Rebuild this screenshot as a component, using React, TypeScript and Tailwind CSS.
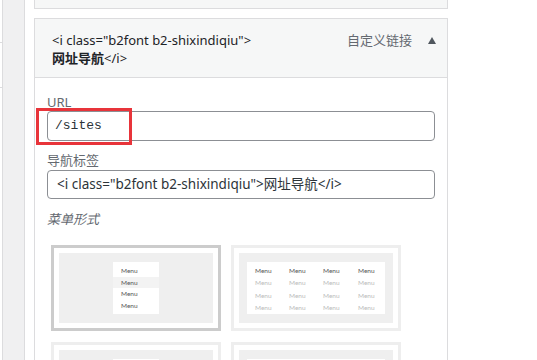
import React from "react";

const sans = { fontFamily: '"Noto Sans", "Noto Sans CJK SC", sans-serif' };
const tiny = { fontFamily: 'Lato, "Noto Sans", sans-serif' };

function VerticalCard({ selected }: { selected?: boolean }) {
  return (
    <div
      className={`w-[170px] h-[86px] border-[3px] ${selected ? "border-[#cccccc]" : "border-[#eeeeee]"} bg-white p-[5px]`}
    >
      <div className="w-full h-full bg-[#efefef] flex justify-center items-start pt-[9px]">
        <div className="w-[46px] h-[52px] bg-white pt-[3px] flex flex-col" style={tiny}>
          {[0, 1, 2, 3].map((i) => (
            <div
              key={i}
              className={`h-[11.5px] leading-[11.5px] text-[6.5px] text-[#555] pl-[8px] ${i === 1 ? "bg-[#f3f3f3]" : ""}`}
            >
              Menu
            </div>
          ))}
        </div>
      </div>
    </div>
  );
}

function GridCard() {
  return (
    <div className="w-[170px] h-[86px] border-[3px] border-[#eeeeee] bg-white p-[5px]">
      <div className="w-full h-full bg-[#efefef] pt-[9px] px-[8px]">
        <div
          className="w-full h-[52px] bg-white pt-[3px] pl-[8px] grid grid-cols-[34px_34px_35px_35px]"
          style={tiny}
        >
          {[0, 1, 2, 3].map((r) =>
            [0, 1, 2, 3].map((c) => (
              <div
                key={`${r}-${c}`}
                className={`h-[11.5px] leading-[11.5px] text-[6.5px] ${r === 0 ? "text-[#555]" : "text-[#bbbbbb]"}`}
              >
                Menu
              </div>
            ))
          )}
        </div>
      </div>
    </div>
  );
}

export default function App() {
  return (
    <div className="relative w-[537px] h-[360px] overflow-hidden flex bg-white" style={sans}>
      {/* left page background strip */}
      <div className="w-[25px] h-full bg-[#f0f0f1] border-r border-[#dcdcde] flex shrink-0">
        <div className="w-[3px] h-full bg-white border-r border-[#dcdcde] flex flex-col">
          <div className="h-[43px] shrink-0 border-b border-[#dcdcde]" />
          <div className="h-[45px] shrink-0 border-b border-[#dcdcde]" />
        </div>
      </div>

      {/* menu edit area */}
      <div className="flex-1 bg-white pl-[9px] flex flex-col">
        <div className="w-[414px] h-[9px] shrink-0 bg-[#f6f7f7] border border-t-0 border-[#dcdcde]" />
        <div className="h-[9px] shrink-0" />
        <div className="w-[414px] shrink-0 border border-[#dcdcde] flex flex-col">
          {/* header */}
          <div className="bg-[#f6f7f7] border-b border-[#dcdcde] pt-[12px] pb-[10px] pl-[17px] pr-[11px] flex justify-between items-start">
            <div className="text-[13px] leading-[18px] text-[#1d2327]">
              &lt;i class="b2font b2-shixindiqiu"&gt;
              <br />
              <span className="font-semibold">网址导航</span>&lt;/i&gt;
            </div>
            <div className="flex items-center gap-[16px] text-[13px] leading-[18px] text-[#646970]">
              <span>自定义链接</span>
              <svg width="8" height="7" viewBox="0 0 8 7">
                <path d="M4 0 L8 7 L0 7 Z" fill="#50575e" />
              </svg>
            </div>
          </div>

          {/* body */}
          <div className="bg-white px-[12px] pt-[15px] flex flex-col">
            <div className="text-[13px] leading-[18px] text-[#646970]">URL</div>
            <div
              className="h-[30px] shrink-0 border border-[#8c8f94] rounded-[4px] flex items-center pl-[7px] text-[13px] text-[#2c3338]"
              style={{ fontFamily: '"Liberation Mono", "DejaVu Sans Mono", monospace' }}
            >
              /sites
            </div>
            <div className="mt-[10px] text-[13px] leading-[19px] text-[#646970]">导航标签</div>
            <div className="h-[29px] shrink-0 border border-[#8c8f94] rounded-[4px] flex items-center pl-[9px] text-[13.5px] text-[#2c3338]">
              &lt;i class="b2font b2-shixindiqiu"&gt;网址导航&lt;/i&gt;
            </div>
            <div className="mt-[11px] text-[13px] leading-[18px] text-[#646970] italic">菜单形式</div>
            <div className="mt-[17px] ml-[4px] grid grid-cols-[170px_170px] gap-x-[10px] gap-y-[11px]">
              <VerticalCard selected />
              <GridCard />
              <VerticalCard />
              <GridCard />
            </div>
          </div>
        </div>
      </div>

      {/* red highlight annotation */}
      <div className="absolute left-[36px] top-[108px] w-[96px] h-[37px] border-[3px] border-[#e8343a]" />
    </div>
  );
}
